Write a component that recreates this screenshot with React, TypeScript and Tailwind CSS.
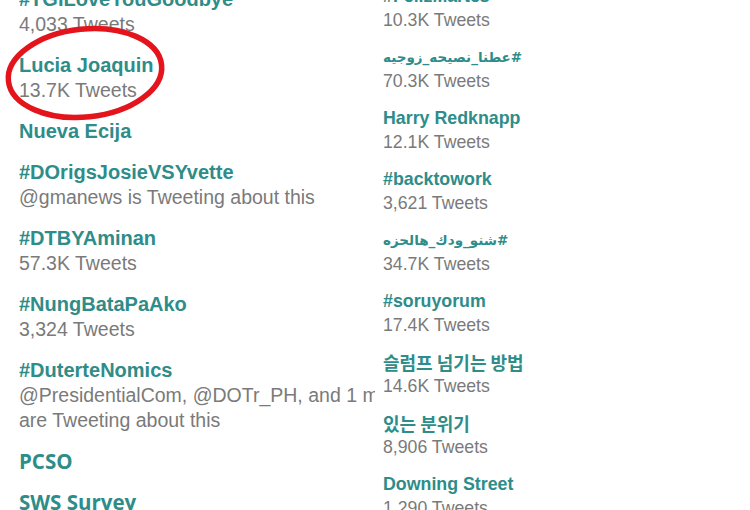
import React from "react";

type Item = { title: string; lines: string[]; kind?: "ar" | "ko" | "alt" };

const left: Item[] = [
  { title: "#TGILoveYouGoodbye", lines: ["4,033 Tweets"] },
  { title: "Lucia Joaquin", lines: ["13.7K Tweets"] },
  { title: "Nueva Ecija", lines: [] },
  { title: "#DOrigsJosieVSYvette", lines: ["@gmanews is Tweeting about this"] },
  { title: "#DTBYAminan", lines: ["57.3K Tweets"] },
  { title: "#NungBataPaAko", lines: ["3,324 Tweets"] },
  {
    title: "#DuterteNomics",
    lines: ["@PresidentialCom, @DOTr_PH, and 1 more", "are Tweeting about this"],
  },
  { title: "PCSO", lines: [], kind: "alt" },
  { title: "SWS Survey", lines: [], kind: "alt" },
];

const right: Item[] = [
  { title: "#FelizMartes", lines: ["10.3K Tweets"] },
  { title: "#عطنا_نصيحه_زوجيه", lines: ["70.3K Tweets"], kind: "ar" },
  { title: "Harry Redknapp", lines: ["12.1K Tweets"] },
  { title: "#backtowork", lines: ["3,621 Tweets"] },
  { title: "#شنو_ودك_هالحزه", lines: ["34.7K Tweets"], kind: "ar" },
  { title: "#soruyorum", lines: ["17.4K Tweets"] },
  { title: "슬럼프 넘기는 방법", lines: ["14.6K Tweets"], kind: "ko" },
  { title: "있는 분위기", lines: ["8,906 Tweets"], kind: "ko" },
  { title: "Downing Street", lines: ["1,290 Tweets"] },
];

const arial = "font-['Liberation_Sans',Arial,sans-serif]";

function LeftItem({ it }: { it: Item }) {
  return (
    <div className="flex flex-col">
      {it.kind === "alt" ? (
        <div className="font-['Open_Sans',sans-serif] font-bold text-[20.5px] leading-[25px] text-[#2e8c89] whitespace-nowrap">
          {it.title}
        </div>
      ) : (
        <div className={`${arial} font-bold text-[20px] leading-[25px] text-[#2e8c89] whitespace-nowrap`}>
          {it.title}
        </div>
      )}
      {it.lines.map((l, i) => (
        <div key={i} className={`${arial} text-[19.5px] leading-[25px] text-[#7a7a7a] whitespace-nowrap`}>
          {l}
        </div>
      ))}
    </div>
  );
}

function RightItem({ it }: { it: Item }) {
  let title: React.ReactNode;
  if (it.kind === "ar") {
    title = (
      <div className="font-['DejaVu_Sans',sans-serif] font-bold text-[13.5px] leading-[24px] text-[#2e8c89] text-left whitespace-nowrap">
        <span dir="rtl">{it.title}</span>
      </div>
    );
  } else if (it.kind === "ko") {
    title = (
      <div className="font-['Noto_Sans_CJK_KR',sans-serif] font-bold text-[18px] leading-[24px] text-[#2e8c89] whitespace-nowrap">
        {it.title}
      </div>
    );
  } else {
    title = (
      <div className={`${arial} font-bold text-[17.8px] leading-[24px] text-[#2e8c89] whitespace-nowrap`}>
        {it.title}
      </div>
    );
  }
  return (
    <div className="flex flex-col">
      {title}
      {it.lines.map((l, i) => (
        <div key={i} className={`${arial} text-[17.7px] leading-[24px] text-[#7a7a7a] whitespace-nowrap`}>
          {l}
        </div>
      ))}
    </div>
  );
}

export default function App() {
  return (
    <div className="relative w-[750px] h-[510px] overflow-hidden bg-white flex">
      <div className="w-[375px] shrink-0 overflow-hidden pl-[19px]">
        <div className="flex flex-col gap-[16px] -mt-[13px]">
          {left.map((it, i) => (
            <LeftItem key={i} it={it} />
          ))}
        </div>
      </div>
      <div className="pl-[8px] flex-1">
        <div className="flex flex-col gap-[13px] -mt-[16px]">
          {right.map((it, i) => (
            <RightItem key={i} it={it} />
          ))}
        </div>
      </div>
      <svg
        className="absolute left-0 top-0 pointer-events-none"
        width="200"
        height="140"
        viewBox="0 0 200 140"
      >
        <ellipse
          cx="85"
          cy="73"
          rx="77"
          ry="44"
          transform="rotate(-6 85 73)"
          fill="none"
          stroke="#e3141b"
          strokeWidth="5.5"
        />
      </svg>
    </div>
  );
}
